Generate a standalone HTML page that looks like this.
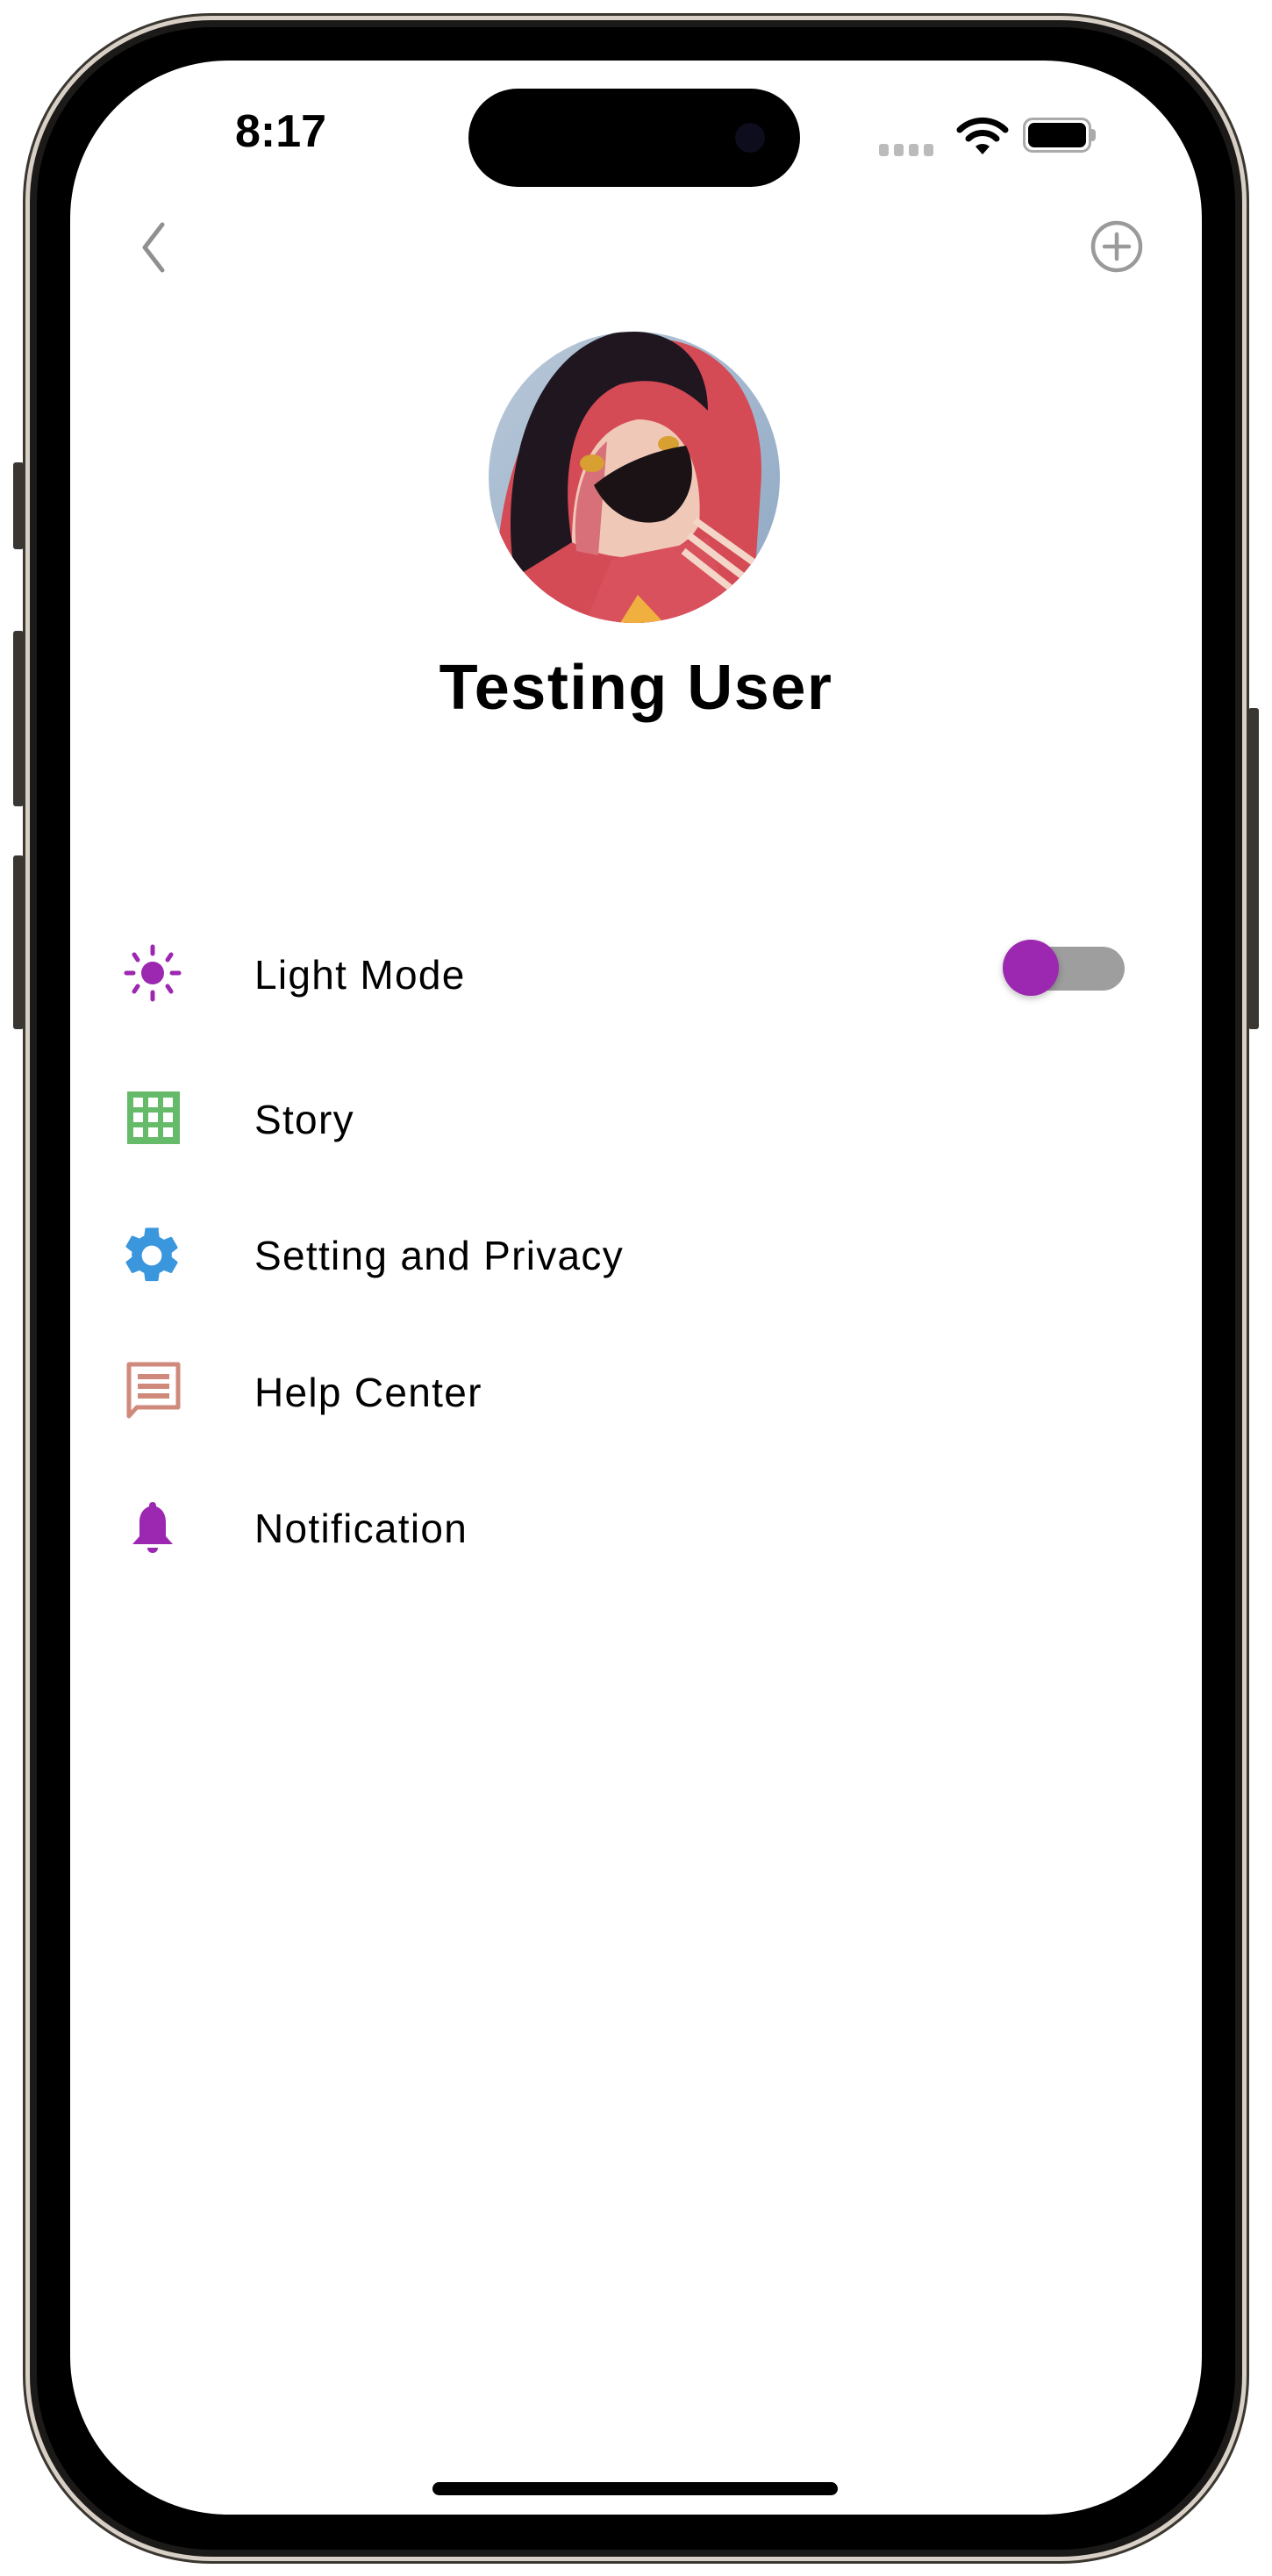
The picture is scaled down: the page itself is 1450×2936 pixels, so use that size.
<!DOCTYPE html>
<html><head><meta charset="utf-8"><style>
html,body{margin:0;padding:0;background:#fff;}
body{width:1450px;height:2936px;position:relative;overflow:hidden;font-family:"Liberation Sans",sans-serif;}
.abs{position:absolute;}
.frame{left:26px;top:15px;width:1398px;height:2907px;border-radius:215px;background:#d8d0c6;box-shadow:inset 0 0 0 3px #3a3630;}
.frame2{left:34px;top:23px;width:1382px;height:2891px;border-radius:207px;background:#1c1a18;}
.bezel{left:42px;top:31px;width:1366px;height:2875px;border-radius:199px;background:#000;}
.screen{left:80px;top:69px;width:1290px;height:2797px;border-radius:180px;background:#fff;overflow:hidden;}
.btn{background:#3a3632;border-radius:3px;}
.island{left:534px;top:101px;width:378px;height:112px;border-radius:56px;background:#000;}
.item{left:290px;font-size:46px;color:#000;letter-spacing:1.3px;line-height:1;}
</style></head><body>
<div class="abs btn" style="left:15px;top:527px;width:12px;height:99px"></div>
<div class="abs btn" style="left:15px;top:719px;width:12px;height:200px"></div>
<div class="abs btn" style="left:15px;top:975px;width:12px;height:198px"></div>
<div class="abs btn" style="left:1423px;top:807px;width:12px;height:366px"></div>
<div class="abs frame"></div>
<div class="abs frame2"></div>
<div class="abs bezel"></div>
<div class="abs screen"></div>
<div class="abs island"></div>
<div class="abs" style="left:838px;top:140px;width:34px;height:34px;border-radius:50%;background:#0d0d1e"></div>
<div class="abs" style="left:244px;top:124px;width:152px;text-align:center;font-size:52px;font-weight:bold;line-height:1">8:17</div>
<div class="abs" style="left:1002px;top:164px;">
<span style="display:inline-block;width:11px;height:14px;background:#bbb;border-radius:3px;margin-right:6px"></span><span style="display:inline-block;width:11px;height:14px;background:#bbb;border-radius:3px;margin-right:6px"></span><span style="display:inline-block;width:11px;height:14px;background:#bbb;border-radius:3px;margin-right:6px"></span><span style="display:inline-block;width:11px;height:14px;background:#bbb;border-radius:3px"></span></div>
<svg class="abs" style="left:1090px;top:130px" width="60" height="50" viewBox="0 0 60 50">
<path d="M4 18 A37 37 0 0 1 56 18" stroke="#000" stroke-width="7" fill="none" stroke-linecap="round"/>
<path d="M14 28 A23 23 0 0 1 46 28" stroke="#000" stroke-width="7" fill="none" stroke-linecap="round"/>
<path d="M22 37 L30 46 L38 37 A12 12 0 0 0 22 37Z" fill="#000"/></svg>
<div class="abs" style="left:1166px;top:134px;width:72px;height:34px;border:3px solid #aaa;border-radius:11px;"></div>
<div class="abs" style="left:1172px;top:140px;width:66px;height:28px;background:#000;border-radius:7px;"></div>
<div class="abs" style="left:1243px;top:147px;width:6px;height:14px;background:#aaa;border-radius:0 4px 4px 0"></div>
<svg class="abs" style="left:155px;top:252px" width="40" height="60" viewBox="0 0 40 60"><path d="M30 4 L10 30 L30 56" stroke="#909090" stroke-width="5" fill="none" stroke-linecap="round" stroke-linejoin="round"/></svg>
<svg class="abs" style="left:1242px;top:250px" width="62" height="62" viewBox="0 0 62 62"><circle cx="31" cy="31" r="27" stroke="#9a9a9a" stroke-width="4.5" fill="none"/><path d="M31 17V45M17 31H45" stroke="#9a9a9a" stroke-width="4.5" stroke-linecap="round"/></svg>
<svg class="abs" style="left:557px;top:378px" width="332" height="332" viewBox="0 0 332 332">
<defs><clipPath id="c"><circle cx="166" cy="166" r="166"/></clipPath>
<linearGradient id="bg" x1="0" y1="0" x2="1" y2="1"><stop offset="0" stop-color="#b8c8d8"/><stop offset="1" stop-color="#8fa8c4"/></linearGradient></defs>
<g clip-path="url(#c)">
<rect width="332" height="332" fill="url(#bg)"/>
<path d="M10 332 C0 200 40 40 160 10 C250 -5 320 60 310 180 L300 332Z" fill="#d44a55"/>
<path d="M30 280 C10 160 50 20 150 0 C210 -5 250 30 250 90 C220 60 190 50 150 60 C100 80 80 150 95 240Z" fill="#1f1620"/>
<path d="M95 240 C95 170 115 110 170 100 C220 100 245 150 240 220 C220 260 150 270 95 240Z" fill="#f0c8b8"/>
<path d="M100 250 C95 200 105 150 135 125 L125 255Z" fill="#d8707a"/>
<ellipse cx="118" cy="150" rx="14" ry="10" fill="#d8a030"/>
<ellipse cx="205" cy="128" rx="12" ry="9" fill="#d8a030"/>
<path d="M120 175 C150 150 190 135 225 130 C240 160 230 200 200 215 C165 225 135 205 120 175Z" fill="#1a1214"/>
<path d="M140 260 C180 250 220 245 250 235 L280 332 L110 332Z" fill="#d9515c"/>
<path d="M235 215 L305 265 M228 232 L298 285 M222 250 L292 305" stroke="#f3d6c8" stroke-width="8"/>
<path d="M150 332 L170 300 L200 332Z" fill="#f0b040"/>
</g></svg>
<div class="abs" style="left:0;width:1450px;top:748px;text-align:center;font-size:72px;font-weight:bold;line-height:1;letter-spacing:1.5px">Testing User</div>

<svg class="abs" style="left:140px;top:1075px" width="68" height="68" viewBox="0 0 68 68"><circle cx="34" cy="34" r="13" fill="#9c27b0"/><g stroke="#9c27b0" stroke-width="5" stroke-linecap="round"><path d="M34 4V12M34 56V64M4 34H12M56 34H64M13 13L17 19M55 13L51 19M13 55L17 49M55 55L51 49"/></g></svg>
<div class="abs item" style="top:1088px">Light Mode</div>
<div class="abs" style="left:1147px;top:1079px;width:135px;height:50px;border-radius:25px;background:#9e9e9e"></div>
<div class="abs" style="left:1143px;top:1071px;width:64px;height:64px;border-radius:50%;background:#9c27b0;box-shadow:0 3px 8px rgba(0,0,0,.25)"></div>

<svg class="abs" style="left:145px;top:1244px" width="60" height="60" viewBox="0 0 60 60"><rect x="0" y="0" width="60" height="60" fill="#66bb6a"/><g fill="#fff"><rect x="7" y="7" width="11" height="11"/><rect x="24" y="7" width="11" height="11"/><rect x="41" y="7" width="11" height="11"/><rect x="7" y="24" width="11" height="11"/><rect x="24" y="24" width="11" height="11"/><rect x="41" y="24" width="11" height="11"/><rect x="7" y="41" width="11" height="11"/><rect x="24" y="41" width="11" height="11"/><rect x="41" y="41" width="11" height="11"/></g></svg>
<div class="abs item" style="top:1253px">Story</div>

<svg class="abs" style="left:135px;top:1393px" width="76" height="76" viewBox="0 0 24 24"><path fill="#3a96dd" d="M19.14 12.94c.04-.3.06-.61.06-.94s-.02-.64-.07-.94l2.03-1.58a.49.49 0 0 0 .12-.61l-1.920-3.32a.49.49 0 0 0-.59-.22l-2.39.96c-.5-.38-1.03-.7-1.62-.94l-.36-2.54A.48.48 0 0 0 13.92 2h-3.84c-.24 0-.43.17-.47.41l-.36 2.54c-.59.24-1.130.57-1.62.94l-2.39-.96a.48.48 0 0 0-.59.22L2.74 8.47c-.12.21-.08.47.12.61l2.03 1.58c-.05.3-.09.63-.09.94s.02.64.07.94l-2.03 1.58a.49.49 0 0 0-.12.61l1.92 3.32c.12.22.37.29.59.22l2.39-.96c.5.38 1.03.7 1.62.94l.36 2.54c.05.24.24.41.48.41h3.84c.24 0 .44-.17.47-.41l.36-2.54c.59-.24 1.13-.56 1.62-.94l2.39.96c.22.08.47 0 .59-.22l1.92-3.32c.12-.22.07-.47-.12-.61l-2.01-1.58zM12 15.6A3.6 3.6 0 1 1 12 8.4a3.6 3.6 0 0 1 0 7.2z"/></svg>
<div class="abs item" style="top:1408px">Setting and Privacy</div>

<svg class="abs" style="left:144px;top:1552px" width="62" height="66" viewBox="0 0 62 66"><path d="M3 3H59V52H12L3 62Z" fill="none" stroke="#d08a7c" stroke-width="5" stroke-linejoin="round"/><g fill="#d08a7c"><rect x="13" y="14" width="36" height="6"/><rect x="13" y="25" width="36" height="6"/><rect x="13" y="36" width="36" height="6"/></g></svg>
<div class="abs item" style="top:1564px">Help Center</div>

<svg class="abs" style="left:147px;top:1710px" width="54" height="66" viewBox="0 0 54 66"><path d="M27 2c3 0 4 2 4 5 8 3 11 10 11 18v16l8 9H4l8-9V25c0-8 3-15 11-18 0-3 1-5 4-5z" fill="#9c27b0"/><path d="M21 54h12c0 4-3 6-6 6s-6-2-6-6z" fill="#9c27b0"/></svg>
<div class="abs item" style="top:1719px">Notification</div>

<div class="abs" style="left:493px;top:2829px;width:462px;height:15px;border-radius:8px;background:#000"></div>
</body></html>
